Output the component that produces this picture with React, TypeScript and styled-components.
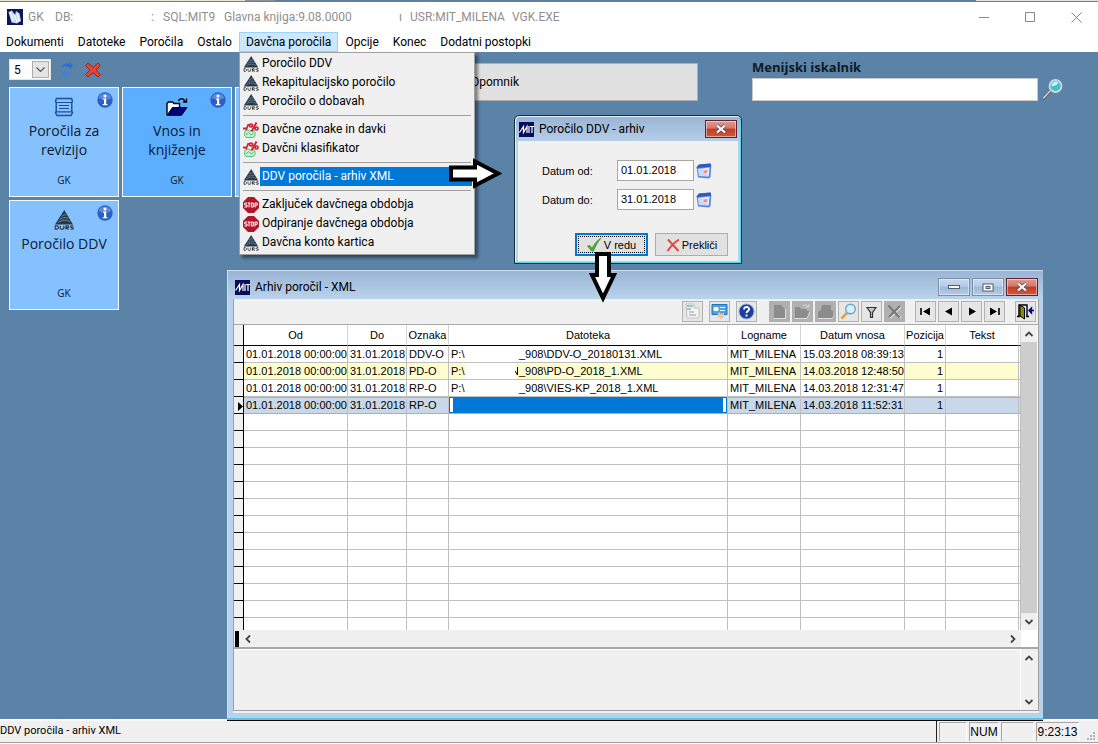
import React from "react";
import styled, { createGlobalStyle, css } from "styled-components";

const GlobalStyle = createGlobalStyle`
  *, *::before, *::after { box-sizing: border-box; }
  html, body { margin: 0; padding: 0; }
  body { background: #5b82a7; color: #000; font-family: Roboto, "Open Sans", sans-serif; font-size: 12px; }
  button, input, select, textarea { font: inherit; color: inherit; margin: 0; border-radius: 0; }
  svg { display: block; flex: none; }
`;

const systemFont = css`font-family: "Liberation Sans", Arial, sans-serif;`;
const wideFont = css`font-family: "Open Sans", "Noto Sans", sans-serif;`;

/* ---------- application frame ---------- */

const Page = styled.div`
  min-height: 100vh;
  display: flex;
  flex-direction: column;
  overflow: hidden;
`;

const BackStrip = styled.div`
  height: 2px;
  display: flex;
  background: #e9e4d4;
  border-bottom: 1px solid #6f7f8c;
`;
const StripPart = styled.span<{ $grow: number; $color: string }>`
  flex: ${(p) => p.$grow} 1 0;
  background: ${(p) => p.$color};
`;

const TitleBar = styled.header`
  height: 30px;
  display: flex;
  align-items: center;
  padding-left: 7px;
  background: #fff;
  color: #8f8f8f;
`;
const TitleParts = styled.div`
  flex: 1;
  display: flex;
  padding-left: 5px;
  white-space: pre;
`;
const TitlePart = styled.span<{ $width: number }>`
  width: ${(p) => p.$width}px;
  flex: none;
`;
const CaptionButton = styled.button`
  width: 46px;
  height: 30px;
  border: 0;
  padding: 0 0 0 2px;
  background: none;
  display: flex;
  align-items: center;
  justify-content: center;
`;

const MenuBar = styled.nav`
  position: relative;
  z-index: 5;
  height: 20px;
  display: flex;
  margin-left: -1px;
  background: #fff;
`;
const MenuBarItem = styled.button<{ $open?: boolean }>`
  height: 20px;
  padding: 0 6px;
  border: 1px solid ${(p) => (p.$open ? "#99d1ff" : "transparent")};
  background: ${(p) => (p.$open ? "#cce8ff" : "transparent")};
  line-height: 18px;
  white-space: nowrap;
`;
const MenuAnchor = styled.div`
  position: relative;
`;
const DropDown = styled.div`
  position: absolute;
  left: 0;
  top: 20px;
  width: 236px;
  padding: 1px 2px 2px;
  border: 1px solid #a0a0a0;
  background: #f0f0f0;
  box-shadow: 3px 3px 3px rgba(0, 0, 0, 0.45);
`;
const MenuItem = styled.button`
  width: 100%;
  height: 19px;
  padding: 0 0 0 1px;
  border: 0;
  background: none;
  display: flex;
  align-items: center;
  text-align: left;
`;
const MenuItemText = styled.span<{ $active?: boolean }>`
  flex: 1;
  height: 19px;
  line-height: 18px;
  margin-left: 1px;
  padding-left: 2px;
  background: ${(p) => (p.$active ? "#0078d7" : "none")};
  color: ${(p) => (p.$active ? "#fff" : "#000")};
`;
const MenuSeparator = styled.hr`
  height: 1px;
  margin: 4px 1px;
  border: 0;
  background: #a0a0a0;
`;

/* ---------- desktop ---------- */

const Desktop = styled.main`
  position: relative;
  flex: 1;
  min-height: 620px;
  background: #5b82a7;
  display: flex;
  align-items: flex-start;
  padding: 7px 35px 0 9px;
`;
const Launcher = styled.section`
  width: 449px;
  flex: none;
`;
const LauncherBar = styled.div`
  display: flex;
  align-items: center;
  height: 21px;
  margin-bottom: 7px;
`;
const PageSelect = styled.div`
  width: 42px;
  height: 21px;
  display: flex;
  background: #fff;
  border: 1px solid #e3e3e3;
  position: relative;
  select {
    width: 100%;
    padding: 0 0 0 4px;
    border: 0;
    background: none;
    appearance: none;
  }
`;
const SelectArrow = styled.span`
  position: absolute;
  right: 1px;
  top: 1px;
  width: 17px;
  height: 17px;
  display: flex;
  align-items: center;
  justify-content: center;
  background: #e4e4e4;
  border: 1px solid #adadad;
  pointer-events: none;
`;
const IconButton = styled.button<{ $gap?: number }>`
  margin-left: ${(p) => p.$gap ?? 0}px;
  border: 0;
  padding: 0;
  background: none;
`;
const Tiles = styled.div`
  display: grid;
  grid-template-columns: repeat(3, 110px);
  grid-auto-rows: 110px;
  gap: 3px;
`;
const Tile = styled.button<{ $strong?: boolean }>`
  ${wideFont}
  position: relative;
  padding: 9px 4px 10px;
  border: 1px solid #f4faff;
  background: ${(p) => (p.$strong ? "#5caeff" : "#85c1ff")};
  color: #0b1a33;
  display: flex;
  flex-direction: column;
  align-items: center;
`;
const TileTitle = styled.span`
  font-size: 14px;
  line-height: 19px;
  margin-top: 4px;
  flex: 1;
`;
const TileGroup = styled.span`
  font-size: 10px;
  line-height: 12px;
`;
const TileInfo = styled.span`
  position: absolute;
  top: 4px;
  right: 5px;
`;
const Reminder = styled.button`
  width: 240px;
  height: 38px;
  margin-top: 4px;
  flex: none;
  padding: 0 12px;
  border: 1px solid #adadad;
  background: #e1e1e1;
  text-align: left;
`;
const Search = styled.div`
  flex: 1;
  margin-left: 54px;
`;
const SearchLabel = styled.label`
  ${wideFont}
  display: block;
  font-size: 13px;
  line-height: 17px;
  font-weight: 700;
  color: #101a24;
`;
const SearchRow = styled.div`
  display: flex;
  align-items: center;
  gap: 4px;
  margin-top: 2px;
  input {
    flex: 1;
    min-width: 0;
    height: 23px;
    border: 1px solid #c9c9c9;
    background: #fff;
  }
`;

/* ---------- windows ---------- */

const Window = styled.section`
  position: absolute;
  display: flex;
  flex-direction: column;
  background: #b9d1ea;
`;
const Dialog = styled(Window)`
  left: 514px;
  top: 63px;
  width: 228px;
  padding: 1px 3px 2px;
  border: 1px solid #1c2b38;
  border-radius: 5px 5px 0 0;
  box-shadow: inset -1px -1px 0 #5fd7e6, inset 1px 1px 0 #e4eef8;
  background: linear-gradient(#98b4d4, #b9d1ea 28px);
`;
const ArchiveWindow = styled(Window)`
  left: 227px;
  right: 55px;
  top: 218px;
  bottom: -2px;
  z-index: 2;
  padding: 0 4px 5px 6px;
  border-bottom: 1px solid #000;
  box-shadow: inset 0 -2px 0 #53c8e6, inset 1px 1px 0 #cfdfee;
  background: linear-gradient(#98b4d4, #b9d1ea 28px);
`;
const WindowTitle = styled.header<{ $height: number; $drop?: number; $indent?: number }>`
  height: ${(p) => p.$height}px;
  flex: none;
  display: flex;
  align-items: center;
  gap: 5px;
  padding: ${(p) => p.$drop ?? 0}px 1px 0 ${(p) => p.$indent ?? 1}px;
`;
const WindowName = styled.h2`
  flex: 1;
  margin: 0;
  font-size: 12px;
  font-weight: 400;
  white-space: nowrap;
`;
const FrameButtons = styled.div`
  display: flex;
  gap: 2px;
`;
const FrameButton = styled.button<{ $close?: boolean }>`
  width: 32px;
  height: 18px;
  padding: 0;
  display: flex;
  align-items: center;
  justify-content: center;
  border: 1px solid ${(p) => (p.$close ? "#5c2430" : "#7c8ea4")};
  box-shadow: inset 0 0 0 1px rgba(255, 255, 255, 0.45);
  background: ${(p) =>
    p.$close
      ? "linear-gradient(#e29a90 0, #d4776a 45%, #bf3b24 50%, #d0593e 100%)"
      : "linear-gradient(#c5d8ec 0, #b6cde6 45%, #9db9d8 50%, #b4cce6 100%)"};
`;

const DialogBody = styled.form`
  ${systemFont}
  font-size: 11px;
  padding: 19px 10px 5px 24px;
  background: #f0f0f0;
`;
const DateRow = styled.div`
  display: grid;
  grid-template-columns: 75px 77px 20px;
  align-items: center;
  margin-bottom: 8px;
  input {
    width: 77px;
    height: 21px;
    padding: 0 3px 2px;
    border: 1px solid #a6a6a6;
    background: #fff;
  }
`;
const DialogButtons = styled.div`
  display: flex;
  justify-content: flex-end;
  gap: 7px;
  margin-top: 23px;
`;
const PushButton = styled.button<{ $default?: boolean }>`
  width: 73px;
  height: 23px;
  padding: 0;
  display: flex;
  align-items: center;
  justify-content: center;
  gap: 2px;
  background: #e1e1e1;
  border: ${(p) => (p.$default ? "2px solid #0078d7" : "1px solid #adadad")};
  outline: ${(p) => (p.$default ? "1px dotted #000" : "none")};
  outline-offset: -4px;
`;

const ArchiveBody = styled.div`
  ${systemFont}
  font-size: 11px;
  flex: 1;
  min-height: 0;
  display: flex;
  flex-direction: column;
  background: #f0f0f0;
  border: 1px solid #a0a0a0;
  border-top: 0;
  box-shadow: 0 2px 0 #e9f1f9;
  margin-bottom: 4px;
`;
const ToolBar = styled.div`
  height: 26px;
  flex: none;
  display: flex;
  align-items: center;
  justify-content: flex-end;
  gap: 10px;
  padding-right: 2px;
  border-bottom: 1px solid #a9a9a9;
`;
const ToolGroup = styled.div<{ $gap: number; $after?: number }>`
  display: flex;
  gap: ${(p) => p.$gap}px;
  margin-right: ${(p) => p.$after ?? 0}px;
`;
const ToolButton = styled.button`
  width: 21px;
  height: 21px;
  padding: 0;
  display: flex;
  align-items: center;
  justify-content: center;
  background: #e6e6e6;
  border: 1px solid #b2b2b2;
  &:disabled { background: #b0b0b0; border-color: #b0b0b0; }
`;
const GridArea = styled.div`
  flex: 1;
  min-height: 0;
  display: flex;
  background: #fff;
`;
const GridClip = styled.div`
  flex: 1;
  min-width: 0;
  overflow: hidden;
`;
const Grid = styled.table`
  width: 100%;
  table-layout: fixed;
  border-collapse: separate;
  border-spacing: 0;
`;
const HeadCell = styled.th`
  height: 21px;
  padding: 0;
  font-weight: 400;
  border-right: 1px solid #d4d4d4;
  border-bottom: 1px solid #000;
  white-space: nowrap;
`;
const MarkCell = styled.td`
  height: 17px;
  padding: 0;
  background: #f0f0f0;
  border-right: 1px solid #000;
  border-bottom: 1px solid #000;
  svg { margin: 2px 0 0 4px; }
`;
const Cell = styled.td<{ $tone?: "stripe" | "active"; $right?: boolean; $flush?: boolean }>`
  height: 17px;
  padding: ${(p) => (p.$flush ? "0" : p.$right ? "0 2px" : "0 0 0 2px")};
  line-height: 16px;
  overflow: hidden;
  white-space: pre;
  border-right: 1px solid #c0c0c0;
  border-bottom: 1px solid #c0c0c0;
  text-align: ${(p) => (p.$right ? "right" : "left")};
  ${(p) => p.$tone === "stripe" && css`background: #fdfdd0;`}
  ${(p) =>
    p.$tone === "active" &&
    css`
      background: #c8d8e8;
      border-bottom-color: #2fe3ef;
      box-shadow: inset 0 1px 0 #2fe3ef;
    `}
`;
const PathCell = styled.span`
  display: flex;
  height: 16px;
`;
const PathMask = styled.span`
  width: 49px;
  background: #fff;
`;
const PathDrive = styled.span`
  width: 15px;
`;
const PathRemnant = styled.span`
  width: 4px;
  padding-top: 4px;
`;
const EditBox = styled.input`
  display: block;
  width: 100%;
  height: 16px;
  padding: 0;
  border: 1px solid #0078d7;
  background: #0078d7;
  box-shadow: inset 3px 0 0 #fff, inset -3px 0 0 #fff;
`;
const VScroll = styled.div`
  width: 16px;
  margin-right: 1px;
  flex: none;
  display: flex;
  flex-direction: column;
  background: #f0f0f0;
`;
const ScrollThumb = styled.div`
  flex: 1;
  background: #cdcdcd;
`;
const ScrollSpace = styled.div`
  flex: 1;
`;
const ScrollArrow = styled.button`
  width: 16px;
  height: 17px;
  flex: none;
  border: 0;
  padding: 0;
  background: #f0f0f0;
  display: flex;
  align-items: center;
  justify-content: center;
`;
const HScroll = styled.div`
  height: 17px;
  flex: none;
  display: flex;
  align-items: center;
  background: #f0f0f0;
`;
const SplitHandle = styled.span`
  width: 4px;
  height: 16px;
  margin: 0 1px;
  background: #000;
`;
const ScrollCorner = styled.span`
  width: 17px;
  height: 17px;
  background: #fff;
`;
const Memo = styled.div`
  height: 63px;
  flex: none;
  display: flex;
  border-top: 2px solid #a5a9a5;
  textarea {
    flex: 1;
    min-width: 0;
    border: 0;
    border-top: 1px solid #fff;
    border-right: 1px solid #fff;
    background: #f0f0f0;
    resize: none;
    overflow: hidden;
  }
`;

/* ---------- status bar ---------- */

const StatusBar = styled.footer`
  font-size: 11px;
  height: 25px;
  display: flex;
  align-items: stretch;
  background: #f0f0f0;
  border-top: 2px solid #fafafa;
  box-shadow: inset 0 -1px 0 #fff, inset 0 -2px 0 #a0a0a0;
  padding-bottom: 2px;
`;
const StatusText = styled.span`
  flex: 1;
  line-height: 20px;
  border-right: 1px solid #222;
`;
const StatusPanel = styled.span<{ $width: number }>`
  ${systemFont}
  font-size: 12px;
  width: ${(p) => p.$width}px;
  margin: 1px 0 1px 2px;
  line-height: 19px;
  text-align: center;
  border-top: 1px solid #a8a8a8;
  border-left: 1px solid #a8a8a8;
  border-right: 1px solid #fff;
`;
const Grip = styled.span`
  width: 19px;
  display: flex;
  align-items: flex-end;
  justify-content: flex-end;
  padding: 0 2px 1px 0;
`;

const Callout = styled.svg<{ $x: number; $y: number }>`
  position: absolute;
  z-index: 8;
  left: ${(p) => p.$x}px;
  top: ${(p) => p.$y}px;
  pointer-events: none;
`;

/* ---------- icons ---------- */

const DursIcon = ({ size = 16 }: { size?: number }) => (
  <svg width={size} height={size} viewBox="0 0 16 16" aria-hidden="true">
    <path d="M8.200 0 L15.200 11.500 H.8 Z" fill="#24384a" />
    <path d="M6 5 Q8 3.200 10 4M4.500 7.500 Q8 4.800 11.600 6.600M3.200 10 Q8 6.500 13.200 9.400" fill="none" stroke="#8c9eac" strokeWidth=".6" />
    <path d="M1 12.700h1.500l1 .8v1l-1 .8H1zM5 12.500v2.200l.7.6h1.400l.7-.6v-2.200M9.500 15.600v-2.900h1.800l.5.700-.5.700h-1.800l2.300 1.500M15.400 12.700h-1.700l-.4.600.4.700h1.400l.4.600-.4.700h-1.800" fill="none" stroke="#3b3b3b" strokeWidth=".9" />
  </svg>
);
const PercentIcon = () => (
  <svg width="16" height="16" viewBox="0 0 16 16" aria-hidden="true">
    <path d="M2 9l3-1 2 1 3-1 2 2v4l-2 1.500H3L1.500 13z" fill="#c4f0cc" stroke="#58bd78" />
    <path d="M3 13l2.500-2.500L8 13l2.500-2" stroke="#58bd78" fill="none" />
    <path d="M0 6.500h4.500M3 8l2.500-6" stroke="#d32632" strokeWidth="1.800" />
    <circle cx="8" cy="3.500" r="1.500" fill="none" stroke="#c81e2c" strokeWidth="1.700" />
    <circle cx="13.500" cy="6.500" r="1.500" fill="none" stroke="#c81e2c" strokeWidth="1.700" />
    <path d="M13.500 .5 L8.500 9.500" stroke="#d32632" strokeWidth="2" />
  </svg>
);
const StopIcon = () => (
  <svg width="16" height="16" viewBox="0 0 16 16" aria-hidden="true">
    <path d="M5 0h6l5 5v6l-5 5H5l-5-5V5z" fill="#b3152b" />
    <path d="M4 6H1.800v2H4v2H1.500M4.600 6h2.800M6 6v4.400M8.300 6h2v4h-2zM12 10.500V6h2.200v2.300H12" fill="none" stroke="#fff" />
  </svg>
);
const InfoIcon = () => (
  <svg width="16" height="16" viewBox="0 0 16 16" aria-hidden="true">
    <circle cx="8" cy="8" r="7.700" fill="#2a5fc4" />
    <path d="M1.500 6a7 7 0 0 1 13 0q-6 3-13 0" fill="#5c89dc" />
    <path d="M6 6.500h3.200V12h1.200v1.200H5.800V12H7V7.700H6z" fill="#fff" />
    <circle cx="8" cy="4" r="1.500" fill="#fff" />
  </svg>
);
const ReportIcon = () => (
  <svg width="20" height="20" viewBox="0 0 20 20" aria-hidden="true">
    <path d="M2.500 1.500h15l1 2.500-.7 1.500v9l.7 1-1.500 3H3l-1.500-3 .7-1v-9L1.500 4z" fill="none" stroke="#1f4f8c" strokeWidth="1.400" />
    <path d="M2.500 5.500h15M5 8.500h10M5 11.500h10M2.500 14.800h15" stroke="#1f4f8c" strokeWidth="1.200" />
  </svg>
);
const OpenFolderIcon = () => (
  <svg width="22" height="20" viewBox="0 0 22 20" aria-hidden="true">
    <path d="M1 18V6.500l1.500-1.500h4L8 6.500h5.500V10" fill="#f4fbff" stroke="#000" strokeWidth="1.400" />
    <path d="M1 18.300 L6.500 10.500H21l-5.500 7.800z" fill="#000080" stroke="#000" />
    <path d="M12.500 4c1-3 5-3 6.500.5M20.500 1.500V5H17" fill="none" stroke="#000" strokeWidth="1.400" />
  </svg>
);
const MitIcon = () => (
  <svg width="15" height="15" viewBox="0 0 15 15" aria-hidden="true">
    <rect width="15" height="15" fill="#070d5e" />
    <path d="M.5 10.500L4.500 4.500v6l3.500-6v6.500M10 4v7M11 4.500h4M13 4.500v6.500" fill="none" stroke="#fff" strokeWidth="1.200" />
  </svg>
);
const AppIcon = () => (
  <svg width="16" height="16" viewBox="0 0 16 16" aria-hidden="true">
    <rect width="16" height="16" fill="#0b1560" />
    <path d="M1.500 3L5 1.500 8 6l1-4 3.500 2.500L14 12l-4 2.500-5.500-1z" fill="#c3d4f5" />
    <path d="M3 3l3.500 9M6.500 5l4 8M10.500 4l1.500 8" fill="none" stroke="#fff" strokeWidth="1.200" />
  </svg>
);
const RefreshIcon = () => (
  <svg width="14" height="16" viewBox="0 0 14 16" aria-hidden="true">
    <path d="M2 5.500c1-4 4.500-4.500 7-3.500V0l4 3.500-3.500 4V5.500C6 4 4 4 2 5.500z" fill="#2d6fd2" />
    <path d="M10.500 10c-1 3-3 3.500-5 3v2.500L1 12l4-3.500v2c2 .5 4 .5 5.500-.5z" fill="#3f7fdc" />
  </svg>
);
const RedCrossIcon = () => (
  <svg width="16" height="16" viewBox="0 0 16 16" aria-hidden="true">
    <path d="M3 1l5 4.500L13 1l2.500 2.500L11 8l4.500 4.500L13 15l-5-4.500L3 15 .5 12.500 5 8 .5 3.500z" fill="#e8432e" stroke="#8e2a2a" />
  </svg>
);
const GlassIcon = ({ size = 21 }: { size?: number }) => (
  <svg width={size} height={size} viewBox="0 0 21 21" aria-hidden="true">
    <path d="M1.500 19.500 L8.500 12" stroke="#5d6b73" strokeWidth="3.200" strokeLinecap="round" />
    <path d="M1.500 19 L8 12" stroke="#c9d0d4" strokeWidth="1.400" strokeLinecap="round" />
    <circle cx="13.500" cy="7" r="6" fill="#45bfd0" stroke="#c9d7da" strokeWidth="1.800" />
    <path d="M9.500 7a4 4 0 0 1 7-3q-3 4-7 3" fill="#c6f3f6" />
  </svg>
);
const CalendarIcon = () => (
  <svg width="16" height="16" viewBox="0 0 16 16" aria-hidden="true">
    <path d="M3 1.500l11.500-1 .8 3-.8 11-2 1L2 14.500.5 4z" fill="#5f88e0" />
    <path d="M3 1.500l11.500-1 .8 3L.5 5z" fill="#2f58c3" />
    <path d="M2 6l11.500-1.500-.8 9L3 13z" fill="#e4edff" />
    <path d="M7.500 7.500l4-.4-.3 3-3.700.3z" fill="#f08c8c" />
    <path d="M3 8l3.500-.4M3.300 10l3.200-.2M3.500 11.800l8 .2" stroke="#9fb9ee" strokeWidth=".8" />
  </svg>
);
const CheckIcon = () => (
  <svg width="15" height="15" viewBox="0 0 15 15" aria-hidden="true">
    <path d="M.5 9l2.500-.5 2 3C7 7 10 3.500 14 1c-3 3.500-5.500 8-7.500 13H4.500z" fill="#4fae3a" stroke="#357c28" strokeWidth=".6" />
  </svg>
);
const CancelIcon = () => (
  <svg width="14" height="14" viewBox="0 0 14 14" aria-hidden="true">
    <path d="M2 1.500 L12.500 13 M13 1.500 C9 4 5 8 1.500 13" stroke="#e5463a" strokeWidth="2" fill="none" />
  </svg>
);
const Chevron = ({ dir }: { dir: "up" | "down" | "left" | "right" }) => {
  const turn = { up: 0, right: 90, down: 180, left: 270 }[dir];
  return (
    <svg width="10" height="10" viewBox="0 0 10 10" aria-hidden="true">
      <path d="M1.500 7 L5 3.500 L8.500 7" fill="none" stroke="#444" strokeWidth="1.800" transform={`rotate(${turn} 5 5)`} />
    </svg>
  );
};
const CloseGlyph = () => (
  <svg width="12" height="10" viewBox="0 0 12 10" aria-hidden="true">
    <path d="M2 1.500l8 7M10 1.500l-8 7" stroke="#4b4f58" strokeWidth="3.600" />
    <path d="M2 1.500l8 7M10 1.500l-8 7" stroke="#fff" strokeWidth="2.200" />
  </svg>
);
const ToolIcon = ({ children }: { children: React.ReactNode }) => (
  <svg width="17" height="17" viewBox="0 0 17 17" aria-hidden="true" fill="none">
    {children}
  </svg>
);

/* ---------- data ---------- */

type MenuEntry = { text: string; icon: React.ReactNode; active?: boolean } | null;
const taxMenu: MenuEntry[] = [
  { text: "Poročilo DDV", icon: <DursIcon /> },
  { text: "Rekapitulacijsko poročilo", icon: <DursIcon /> },
  { text: "Poročilo o dobavah", icon: <DursIcon /> },
  null,
  { text: "Davčne oznake in davki", icon: <PercentIcon /> },
  { text: "Davčni klasifikator", icon: <PercentIcon /> },
  null,
  { text: "DDV poročila - arhiv XML", icon: <DursIcon />, active: true },
  null,
  { text: "Zaključek davčnega obdobja", icon: <StopIcon /> },
  { text: "Odpiranje davčnega obdobja", icon: <StopIcon /> },
  { text: "Davčna konto kartica", icon: <DursIcon /> },
];

const columns: [string, number | undefined][] = [
  ["Od", 104],
  ["Do", 59],
  ["Oznaka", 42],
  ["Datoteka", undefined],
  ["Logname", 73],
  ["Datum vnosa", 104],
  ["Pozicija", 41],
  ["Tekst", 73],
];

type Row = { kind: string; path?: string; remnant?: boolean; stamp: string; tone?: "stripe" | "active" };
const rows: Row[] = [
  { kind: "DDV-O", path: "_908\\DDV-O_20180131.XML", stamp: "15.03.2018 08:39:13" },
  { kind: "PD-O", path: "_908\\PD-O_2018_1.XML", remnant: true, stamp: "14.03.2018 12:48:50", tone: "stripe" },
  { kind: "RP-O", path: "_908\\VIES-KP_2018_1.XML", stamp: "14.03.2018 12:31:47" },
  { kind: "RP-O", stamp: "14.03.2018 11:52:31", tone: "active" },
];
const blankRows = Array.from({ length: 13 }, (_, i) => i);

/* ---------- parts ---------- */

const MainMenu = () => (
  <MenuBar>
    {["Dokumenti", "Datoteke", "Poročila", "Ostalo"].map((m) => (
      <MenuBarItem key={m}>{m}</MenuBarItem>
    ))}
    <MenuAnchor>
      <MenuBarItem $open>Davčna poročila</MenuBarItem>
      <DropDown>
        {taxMenu.map((entry, i) =>
          entry ? (
            <MenuItem key={i}>
              {entry.icon}
              <MenuItemText $active={entry.active}>{entry.text}</MenuItemText>
            </MenuItem>
          ) : (
            <MenuSeparator key={i} />
          )
        )}
      </DropDown>
    </MenuAnchor>
    {["Opcije", "Konec", "Dodatni postopki"].map((m) => (
      <MenuBarItem key={m}>{m}</MenuBarItem>
    ))}
  </MenuBar>
);

const ArchiveTools = () => (
  <ToolBar>
    <ToolGroup $gap={6} $after={2}>
      <ToolButton aria-label="Izpis">
        <ToolIcon>
          <path d="M2 1h8v4h5v10H3z" fill="#f3f3f3" stroke="#c4c4c4" />
          <path d="M3 3h6M3 6h4" stroke="#76b9c4" strokeWidth="1.600" />
          <path d="M5 9h5M5 12h7" stroke="#b9b9b9" strokeWidth="1.400" />
        </ToolIcon>
      </ToolButton>
      <ToolButton aria-label="Nastavitve">
        <ToolIcon>
          <path d="M1 1.500h15v10H1z" fill="#42a5e8" stroke="#1c73b8" />
          <path d="M3 4.500h4v3H3zM9 4.500h5M9 7.500h5" fill="#fff3a0" stroke="#fff" />
          <path d="M6 13l2-4 2 2 3-1v4l-3 2z" fill="#f0c79c" />
        </ToolIcon>
      </ToolButton>
      <ToolButton aria-label="Pomoč">
        <ToolIcon>
          <circle cx="8.500" cy="8.500" r="7.500" fill="#1d3f9c" stroke="#8fa6dd" />
          <path d="M6 6.500c0-3.500 5.500-3.200 5 0-.2 1.500-2.500 1.800-2.500 3.600M8.500 11.500v2" stroke="#fff" strokeWidth="1.900" />
        </ToolIcon>
      </ToolButton>
    </ToolGroup>
    <ToolGroup $gap={2}>
      <ToolButton disabled aria-label="Novo">
        <ToolIcon><path d="M3 2h7l4 4v9H3z" fill="#8c8c8c" /><path d="M3 15.500h11.500V6" stroke="#ddd" /></ToolIcon>
      </ToolButton>
      <ToolButton disabled aria-label="Odpri">
        <ToolIcon><path d="M1 4h5l1 2h6v2h3l-3 7H1z" fill="#8c8c8c" /><path d="M1 15.500h12l3-7M9 3c2-2 4-1 5 1M15 1v3h-3" stroke="#ddd" /></ToolIcon>
      </ToolButton>
      <ToolButton disabled aria-label="Shrani">
        <ToolIcon><path d="M5 2h9v5l2 1v7H1V9l3-2z" fill="#8c8c8c" /><path d="M1 15.500h14l1.500-2" stroke="#ddd" /></ToolIcon>
      </ToolButton>
      <ToolButton aria-label="Išči">
        <ToolIcon>
          <path d="M1.500 15.500L7 10" stroke="#e0a04a" strokeWidth="2.600" />
          <circle cx="10.500" cy="6" r="4.800" fill="#d7f1fb" stroke="#6ba7c7" strokeWidth="1.400" />
        </ToolIcon>
      </ToolButton>
      <ToolButton aria-label="Filter">
        <ToolIcon><path d="M4 4.500h9l-3.500 5v5h-2v-5z" fill="#c9c9c9" stroke="#333" strokeWidth="1.200" /></ToolIcon>
      </ToolButton>
      <ToolButton disabled aria-label="Briši">
        <ToolIcon><path d="M4 4l11 11M15 4L4 15" stroke="#e6e6e6" strokeWidth="1.600" /><path d="M2.500 2.500l11 12M14 3L3 14" stroke="#777" strokeWidth="2" /></ToolIcon>
      </ToolButton>
    </ToolGroup>
    <ToolGroup $gap={2}>
      <ToolButton aria-label="Prvi"><ToolIcon><path d="M4 5v7" stroke="#000" strokeWidth="1.600" /><path d="M13 4.500v8l-7-4z" fill="#000" /></ToolIcon></ToolButton>
      <ToolButton aria-label="Prejšnji"><ToolIcon><path d="M12 4.500v8l-7-4z" fill="#000" /></ToolIcon></ToolButton>
      <ToolButton aria-label="Naslednji"><ToolIcon><path d="M6 4.500v8l7-4z" fill="#000" /></ToolIcon></ToolButton>
      <ToolButton aria-label="Zadnji"><ToolIcon><path d="M4 4.500v8l7-4z" fill="#000" /><path d="M13 5v7" stroke="#000" strokeWidth="1.600" /></ToolIcon></ToolButton>
    </ToolGroup>
    <ToolButton aria-label="Izhod">
      <ToolIcon>
        <path d="M2 13V2h8v11M0 13.500h3M9 13.500h3" stroke="#000" strokeWidth="1.400" />
        <path d="M3 2l4.500 3v11L3 13z" fill="#8a8a1c" stroke="#000" />
        <path d="M17 7.500h-3M14.500 5v5L12 7.500z" stroke="#000080" strokeWidth="1.400" fill="#000080" />
      </ToolIcon>
    </ToolButton>
  </ToolBar>
);

const ArchiveGrid = () => (
  <Grid>
    <colgroup>
      <col style={{ width: 10 }} />
      {columns.map(([name, width]) => (
        <col key={name} style={width ? { width } : undefined} />
      ))}
      <col style={{ width: 2 }} />
    </colgroup>
    <thead>
      <tr>
        <MarkCell as="th" />
        {columns.map(([name]) => (
          <HeadCell key={name}>{name}</HeadCell>
        ))}
        <HeadCell />
      </tr>
    </thead>
    <tbody>
      {rows.map((r) => (
        <tr key={r.stamp}>
          <MarkCell>
            {r.tone === "active" && (
              <svg width="5" height="9" viewBox="0 0 5 9"><path d="M0 0l5 4.500-5 4.500z" /></svg>
            )}
          </MarkCell>
          <Cell $tone={r.tone}>01.01.2018 00:00:00</Cell>
          <Cell $tone={r.tone}>31.01.2018</Cell>
          <Cell $tone={r.tone}>{r.kind}</Cell>
          <Cell $tone={r.tone} $flush={!r.path}>
            {r.path ? (
              <PathCell>
                <PathDrive>P:\</PathDrive>
                <PathMask />
                <PathRemnant>
                  {r.remnant && (
                    <svg width="4" height="8" viewBox="0 0 4 8"><path d="M2.500 0v8M0 4l2.500 4" fill="none" stroke="#000" /></svg>
                  )}
                </PathRemnant>
                <span>{r.path}</span>
              </PathCell>
            ) : (
              <EditBox aria-label="Datoteka" />
            )}
          </Cell>
          <Cell $tone={r.tone}>MIT_MILENA</Cell>
          <Cell $tone={r.tone}>{r.stamp}</Cell>
          <Cell $tone={r.tone} $right>1</Cell>
          <Cell $tone={r.tone} />
          <Cell $tone={r.tone} $flush />
        </tr>
      ))}
      {blankRows.map((i) => (
        <tr key={i}>
          <MarkCell />
          {columns.map(([name]) => (
            <Cell key={name} />
          ))}
          <Cell $flush />
        </tr>
      ))}
    </tbody>
  </Grid>
);

export default function App() {
  return (
    <Page>
      <GlobalStyle />
      <BackStrip>
        <StripPart $grow={245} $color="#e9e4d4" />
        <StripPart $grow={30} $color="#8c9298" />
        <StripPart $grow={701} $color="#5d7f9d" />
        <StripPart $grow={122} $color="#e4e4e4" />
      </BackStrip>
      <TitleBar>
        <AppIcon />
        <TitleParts>
          <TitlePart $width={27}>GK</TitlePart>
          <TitlePart $width={96}>DB:</TitlePart>
          <TitlePart $width={12}>:</TitlePart>
          <TitlePart $width={61}>SQL:MIT9</TitlePart>
          <TitlePart $width={175}>Glavna knjiga:9.08.0000</TitlePart>
          <TitlePart $width={11}>ı</TitlePart>
          <TitlePart $width={102}>USR:MIT_MILENA</TitlePart>
          <TitlePart $width={60}>VGK.EXE</TitlePart>
        </TitleParts>
        <CaptionButton aria-label="Pomanjšaj">
          <svg width="10" height="10"><path d="M0 5.500h10" stroke="#888" /></svg>
        </CaptionButton>
        <CaptionButton aria-label="Povečaj">
          <svg width="10" height="10"><path d="M.5.5h9v9h-9z" stroke="#888" fill="none" /></svg>
        </CaptionButton>
        <CaptionButton aria-label="Zapri">
          <svg width="11" height="11"><path d="M.5.5l10 10M10.500.5l-10 10" stroke="#888" /></svg>
        </CaptionButton>
      </TitleBar>
      <MainMenu />

      <Desktop>
        <Launcher>
          <LauncherBar>
            <PageSelect>
              <select aria-label="Stran" defaultValue="5">
                <option>5</option>
              </select>
              <SelectArrow>
                <svg width="9" height="6" viewBox="0 0 9 6"><path d="M.5.5l4 4 4-4" fill="none" stroke="#555" strokeWidth="1.200" /></svg>
              </SelectArrow>
            </PageSelect>
            <IconButton $gap={9} aria-label="Osveži"><RefreshIcon /></IconButton>
            <IconButton $gap={11} aria-label="Odstrani"><RedCrossIcon /></IconButton>
          </LauncherBar>
          <Tiles>
            <Tile>
              <TileInfo><InfoIcon /></TileInfo>
              <ReportIcon />
              <TileTitle>Poročila za revizijo</TileTitle>
              <TileGroup>GK</TileGroup>
            </Tile>
            <Tile $strong>
              <TileInfo><InfoIcon /></TileInfo>
              <OpenFolderIcon />
              <TileTitle>Vnos in knjiženje</TileTitle>
              <TileGroup>GK</TileGroup>
            </Tile>
            <Tile aria-label="Bližnjica" />
            <Tile>
              <TileInfo><InfoIcon /></TileInfo>
              <DursIcon size={20} />
              <TileTitle>Poročilo DDV</TileTitle>
              <TileGroup>GK</TileGroup>
            </Tile>
          </Tiles>
        </Launcher>
        <Reminder>Opomnik</Reminder>
        <Search>
          <SearchLabel htmlFor="menu-search">Menijski iskalnik</SearchLabel>
          <SearchRow>
            <input id="menu-search" type="text" />
            <IconButton aria-label="Išči"><GlassIcon /></IconButton>
          </SearchRow>
        </Search>

        <Dialog>
          <WindowTitle $height={24}>
            <MitIcon />
            <WindowName>Poročilo DDV - arhiv</WindowName>
            <FrameButton $close aria-label="Zapri"><CloseGlyph /></FrameButton>
          </WindowTitle>
          <DialogBody>
            <DateRow>
              <label htmlFor="date-from">Datum od:</label>
              <input id="date-from" defaultValue="01.01.2018" />
              <IconButton type="button" $gap={2} aria-label="Koledar od"><CalendarIcon /></IconButton>
            </DateRow>
            <DateRow>
              <label htmlFor="date-to">Datum do:</label>
              <input id="date-to" defaultValue="31.01.2018" />
              <IconButton type="button" $gap={2} aria-label="Koledar do"><CalendarIcon /></IconButton>
            </DateRow>
            <DialogButtons>
              <PushButton type="button" $default><CheckIcon />V redu</PushButton>
              <PushButton type="button"><CancelIcon />Prekliči</PushButton>
            </DialogButtons>
          </DialogBody>
        </Dialog>

        <ArchiveWindow>
          <WindowTitle $height={29} $drop={5} $indent={2}>
            <MitIcon />
            <WindowName>Arhiv poročil - XML</WindowName>
            <FrameButtons>
              <FrameButton aria-label="Pomanjšaj">
                <svg width="12" height="6"><rect x=".5" y="1.500" width="11" height="3" fill="#fff" stroke="#555d6b" /></svg>
              </FrameButton>
              <FrameButton aria-label="Povečaj">
                <svg width="12" height="9"><rect x="1" y="1" width="10" height="7" fill="#fff" stroke="#555d6b" /><rect x="4" y="3.500" width="4" height="2" fill="#9db9d8" stroke="#555d6b" /></svg>
              </FrameButton>
              <FrameButton $close aria-label="Zapri"><CloseGlyph /></FrameButton>
            </FrameButtons>
          </WindowTitle>
          <ArchiveBody>
            <ArchiveTools />
            <GridArea>
              <GridClip><ArchiveGrid /></GridClip>
              <VScroll>
                <ScrollArrow aria-label="Gor"><Chevron dir="up" /></ScrollArrow>
                <ScrollThumb />
                <ScrollArrow aria-label="Dol"><Chevron dir="down" /></ScrollArrow>
              </VScroll>
            </GridArea>
            <HScroll>
              <SplitHandle />
              <ScrollArrow aria-label="Levo"><Chevron dir="left" /></ScrollArrow>
              <ScrollSpace />
              <ScrollArrow aria-label="Desno"><Chevron dir="right" /></ScrollArrow>
              <ScrollCorner />
            </HScroll>
            <Memo>
              <textarea aria-label="Vsebina" readOnly />
              <VScroll>
                <ScrollArrow aria-label="Gor"><Chevron dir="up" /></ScrollArrow>
                <ScrollSpace />
                <ScrollArrow aria-label="Dol"><Chevron dir="down" /></ScrollArrow>
              </VScroll>
            </Memo>
          </ArchiveBody>
        </ArchiveWindow>
      </Desktop>

      <StatusBar>
        <StatusText>DDV poročila - arhiv XML</StatusText>
        <StatusPanel $width={28} />
        <StatusPanel $width={30}>NUM</StatusPanel>
        <StatusPanel $width={33} />
        <StatusPanel $width={43}>9:23:13</StatusPanel>
        <Grip>
          <svg width="9" height="9" fill="#b4b4b4">
            <path d="M6 0h2v2H6zM3 3h2v2H3zM6 3h2v2H6zM0 6h2v2H0zM3 6h2v2H3zM6 6h2v2H6z" />
          </svg>
        </Grip>
      </StatusBar>

      <Callout $x={448} $y={157} width="54" height="32">
        <path d="M3 10.500H27V4.500L50 16.500 27 28.500V22.500H3z" fill="#fff" stroke="#000" strokeWidth="4" />
      </Callout>
      <Callout $x={588} $y={252} width="30" height="51">
        <path d="M9 2H21V23H26L15 46 4 23H9z" fill="#fff" stroke="#000" strokeWidth="4" />
      </Callout>
    </Page>
  );
}
